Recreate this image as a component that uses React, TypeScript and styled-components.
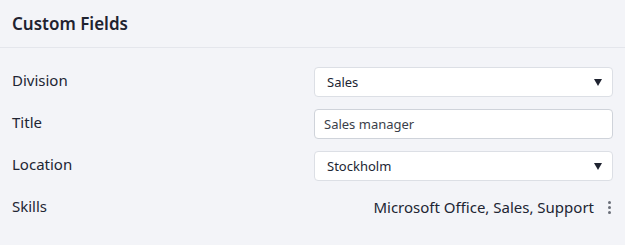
import styled, { createGlobalStyle } from "styled-components";

const GlobalStyle = createGlobalStyle`
  html, body {
    margin: 0;
    padding: 0;
    background: #ffffff;
  }
  body {
    font-family: "Noto Sans", "Open Sans", Arial, sans-serif;
    color: #212529;
  }
`;

const StyledPanel = styled.section`
  width: 625px;
  height: 245px;
  background-color: #f3f4f8;
  box-sizing: border-box;
`;

const StyledHeader = styled.header`
  height: 47px;
  display: flex;
  align-items: center;
  padding: 0 12px;
  border-bottom: 1px solid #e4e6ec;
`;

const StyledTitle = styled.h2`
  margin: 0;
  font-size: 17px;
  font-weight: 600;
  color: #1f2330;
`;

const StyledBody = styled.div`
  display: flex;
  flex-direction: column;
  gap: 12px;
  padding: 19px 12px 0;
`;

const StyledRow = styled.div`
  display: flex;
  align-items: center;
  justify-content: space-between;
  height: 30px;
`;

const StyledLabel = styled.span`
  font-size: 15px;
  color: #212533;
  padding-bottom: 4px;
`;

const StyledControl = styled.div`
  width: 299px;
  height: 30px;
  box-sizing: border-box;
  display: flex;
  align-items: center;
  justify-content: space-between;
  padding: 0 8px 0 12px;
  background-color: #ffffff;
  border: 1px solid #dcdfe5;
  border-radius: 4px;
  font-size: 13px;
  color: #212533;
`;

const StyledInput = styled.input`
  width: 299px;
  height: 30px;
  box-sizing: border-box;
  padding: 0 9px;
  background-color: #ffffff;
  border: 1px solid #cfd3da;
  border-radius: 4px;
  font-family: inherit;
  font-size: 13px;
  color: #3b3f4a;
  outline: none;
`;

const StyledCaret = styled.span`
  width: 0;
  height: 0;
  border-left: 4px solid transparent;
  border-right: 4px solid transparent;
  border-top: 7px solid #1f2330;
  margin-right: 2px;
`;

const StyledValue = styled.div`
  display: flex;
  align-items: center;
  gap: 14px;
  padding-right: 2px;
  padding-bottom: 2px;
  font-size: 15px;
  color: #212533;
`;

const StyledKebab = styled.span`
  display: flex;
  flex-direction: column;
  gap: 2px;

  & > i {
    width: 3px;
    height: 3px;
    border-radius: 50%;
    background-color: #6a6e78;
  }
`;

interface ISelectProps {
  value: string;
}

const Select = ({ value }: ISelectProps) => (
  <StyledControl>
    <span>{value}</span>
    <StyledCaret />
  </StyledControl>
);

export default function App() {
  return (
    <>
      <GlobalStyle />
      <StyledPanel>
        <StyledHeader>
          <StyledTitle>Custom Fields</StyledTitle>
        </StyledHeader>
        <StyledBody>
          <StyledRow>
            <StyledLabel>Division</StyledLabel>
            <Select value="Sales" />
          </StyledRow>
          <StyledRow>
            <StyledLabel>Title</StyledLabel>
            <StyledInput defaultValue="Sales manager" />
          </StyledRow>
          <StyledRow>
            <StyledLabel>Location</StyledLabel>
            <Select value="Stockholm" />
          </StyledRow>
          <StyledRow>
            <StyledLabel>Skills</StyledLabel>
            <StyledValue>
              Microsoft Office, Sales, Support
              <StyledKebab>
                <i />
                <i />
                <i />
              </StyledKebab>
            </StyledValue>
          </StyledRow>
        </StyledBody>
      </StyledPanel>
    </>
  );
}
